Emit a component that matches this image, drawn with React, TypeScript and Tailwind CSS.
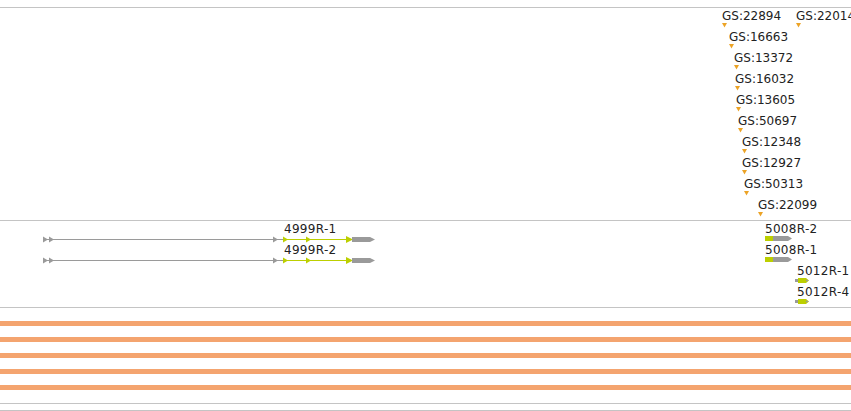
import React from 'react'

const GRAY = '#9a9a9a'
const GREEN = '#bccf00'

const markers: [number, string, number][] = [
  [722, 'GS:22894', 0],
  [796, 'GS:22014', 0],
  [729, 'GS:16663', 1],
  [734, 'GS:13372', 2],
  [735, 'GS:16032', 3],
  [736, 'GS:13605', 4],
  [738, 'GS:50697', 5],
  [742, 'GS:12348', 6],
  [742, 'GS:12927', 7],
  [744, 'GS:50313', 8],
  [758, 'GS:22099', 9],
]

function Marker({ x, label, row }: { x: number; label: string; row: number }) {
  return (
    <div className="absolute flex flex-col" style={{ left: x, top: 2 + row * 21 }}>
      <span className="text-[12px] leading-[13px] text-[#222] whitespace-nowrap">{label}</span>
      <svg width="6" height="5" className="block">
        <polygon points="0,0 5,0 2.5,4.5" fill="#eca326" />
      </svg>
    </div>
  )
}

function Arrow({ x, color }: { x: number; color: string }) {
  return <polygon points={`${x},3.5 ${x + 5},6.5 ${x},9.5`} fill={color} />
}

function LongGene({ top }: { top: number }) {
  return (
    <svg className="absolute left-0" width="851" height="12" style={{ top }}>
      <rect x="44" y="6" width="240" height="1" fill={GRAY} />
      <Arrow x={43} color={GRAY} />
      <Arrow x={49} color={GRAY} />
      <Arrow x={273} color={GRAY} />
      <rect x="284" y="6" width="64" height="1" fill={GREEN} />
      <Arrow x={283} color={GREEN} />
      <Arrow x={306} color={GREEN} />
      <polygon points="346,3 353,6.5 346,10" fill={GREEN} />
      <polygon points="352,4 370,4 375,6.5 370,9 352,9" fill={GRAY} />
    </svg>
  )
}

function ShortGene({ top }: { top: number }) {
  return (
    <svg className="absolute left-0" width="851" height="12" style={{ top }}>
      <rect x="765" y="3" width="8" height="5" fill={GREEN} />
      <polygon points="773,3 788,3 792,5.5 788,8 773,8" fill={GRAY} />
    </svg>
  )
}

function TinyGene({ top }: { top: number }) {
  return (
    <svg className="absolute left-0" width="851" height="12" style={{ top }}>
      <rect x="795" y="4" width="3" height="3" fill={GRAY} />
      <rect x="798" y="3" width="6" height="5" fill={GREEN} />
      <polygon points="804,3 806,3 809,5.5 806,8 804,8" fill={GREEN} />
      <polygon points="806,4.5 809,5.5 806,6.5" fill={GRAY} />
    </svg>
  )
}

function Label({ x, top, text }: { x: number; top: number; text: string }) {
  return (
    <span
      className="absolute text-[12px] leading-[13px] tracking-[0.3px] text-[#222] whitespace-nowrap"
      style={{ left: x, top }}
    >
      {text}
    </span>
  )
}

export default function App() {
  return (
    <div className="w-[851px] h-[411px] overflow-hidden bg-white flex flex-col font-['DejaVu_Sans',sans-serif]">
      <div className="h-[8px] shrink-0 border-b border-[#c4c4c4]" />

      <div className="relative h-[213px] shrink-0 border-b border-[#c4c4c4]">
        {markers.map(([x, label, row]) => (
          <Marker key={label} x={x} label={label} row={row} />
        ))}
      </div>

      <div className="relative h-[87px] shrink-0 border-b border-[#c4c4c4]">
        <Label x={284} top={2} text="4999R-1" />
        <LongGene top={12} />
        <Label x={284} top={23} text="4999R-2" />
        <LongGene top={33} />

        <Label x={765} top={2} text="5008R-2" />
        <ShortGene top={12} />
        <Label x={765} top={23} text="5008R-1" />
        <ShortGene top={33} />

        <Label x={797} top={44} text="5012R-1" />
        <TinyGene top={54} />
        <Label x={797} top={65} text="5012R-4" />
        <TinyGene top={75} />
      </div>

      <div className="h-[96px] shrink-0 flex flex-col gap-[11px] pt-[13px] border-b border-[#c4c4c4]">
        <div className="h-[5px] bg-[#f4a46f]" />
        <div className="h-[5px] bg-[#f4a46f]" />
        <div className="h-[5px] bg-[#f4a46f]" />
        <div className="h-[5px] bg-[#f4a46f]" />
        <div className="h-[5px] bg-[#f4a46f]" />
      </div>

      <div className="h-[7px] shrink-0 border-b border-[#c4c4c4]" />
    </div>
  )
}
